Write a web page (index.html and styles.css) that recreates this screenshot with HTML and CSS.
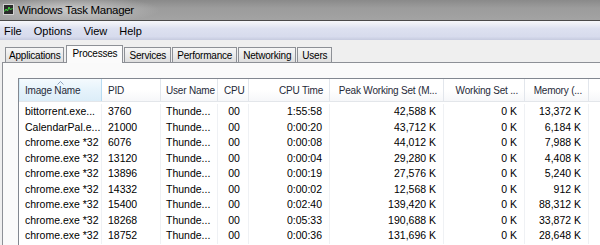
FILE: index.html
```html
<!DOCTYPE html>
<html lang="en">
<head>
  <meta charset="UTF-8" />
  <title>Windows Task Manager</title>
  <link rel="stylesheet" href="styles.css">
</head>
<body>
  <div class="window">
    <div class="titlebar">
      <svg class="app-icon" width="11" height="11" viewBox="0 0 11 11">
        <rect x="0.5" y="0.5" width="10" height="10" fill="#2b2b2b" stroke="#d0d0d0"/>
        <polyline points="1.5,7.5 3,5 4.5,7 6,3 7.5,6 9.5,4" fill="none" stroke="#3fd83f" stroke-width="1"/>
      </svg>
      <span class="title">Windows Task Manager</span>
    </div>

    <div class="menubar">
      <span>File</span>
      <span>Options</span>
      <span>View</span>
      <span>Help</span>
    </div>

    <div class="tabstrip">
      <div class="tab first">Applications</div>
      <div class="tab active">Processes</div>
      <div class="tab">Services</div>
      <div class="tab">Performance</div>
      <div class="tab">Networking</div>
      <div class="tab">Users</div>
    </div>

    <div class="panel">
      <div class="listview">
        <div class="lv-header">
          <div class="hcell sorted">
            <svg class="sort-arrow" width="7" height="4" viewBox="0 0 7 4">
              <polyline points="0.5,3.5 3.5,0.5 6.5,3.5" fill="none" stroke="#8fa3bb" stroke-width="1"/>
            </svg>
            Image Name
          </div>
          <div class="hcell">PID</div>
          <div class="hcell narrow">User Name</div>
          <div class="hcell">CPU</div>
          <div class="hcell right">CPU Time</div>
          <div class="hcell right">Peak Working Set (M...</div>
          <div class="hcell right">Working Set ...</div>
          <div class="hcell right">Memory (...</div>
          <div class="hcell last"></div>
        </div>

        <div class="lv-body">
          <div class="lv-row"><span>bittorrent.exe...</span><span>3760</span><span class="narrow">Thunde...</span><span class="center">00</span><span class="right">1:55:58</span><span class="right">42,588 K</span><span class="right">0 K</span><span class="right">13,372 K</span><span class="last"></span></div>
          <div class="lv-row"><span>CalendarPal.e...</span><span>21000</span><span class="narrow">Thunde...</span><span class="center">00</span><span class="right">0:00:20</span><span class="right">43,712 K</span><span class="right">0 K</span><span class="right">6,184 K</span><span class="last"></span></div>
          <div class="lv-row"><span>chrome.exe *32</span><span>6076</span><span class="narrow">Thunde...</span><span class="center">00</span><span class="right">0:00:08</span><span class="right">44,012 K</span><span class="right">0 K</span><span class="right">7,988 K</span><span class="last"></span></div>
          <div class="lv-row"><span>chrome.exe *32</span><span>13120</span><span class="narrow">Thunde...</span><span class="center">00</span><span class="right">0:00:04</span><span class="right">29,280 K</span><span class="right">0 K</span><span class="right">4,408 K</span><span class="last"></span></div>
          <div class="lv-row"><span>chrome.exe *32</span><span>13896</span><span class="narrow">Thunde...</span><span class="center">00</span><span class="right">0:00:19</span><span class="right">27,576 K</span><span class="right">0 K</span><span class="right">5,240 K</span><span class="last"></span></div>
          <div class="lv-row"><span>chrome.exe *32</span><span>14332</span><span class="narrow">Thunde...</span><span class="center">00</span><span class="right">0:00:02</span><span class="right">12,568 K</span><span class="right">0 K</span><span class="right">912 K</span><span class="last"></span></div>
          <div class="lv-row"><span>chrome.exe *32</span><span>15400</span><span class="narrow">Thunde...</span><span class="center">00</span><span class="right">0:02:40</span><span class="right">139,420 K</span><span class="right">0 K</span><span class="right">88,312 K</span><span class="last"></span></div>
          <div class="lv-row"><span>chrome.exe *32</span><span>18268</span><span class="narrow">Thunde...</span><span class="center">00</span><span class="right">0:05:33</span><span class="right">190,688 K</span><span class="right">0 K</span><span class="right">33,872 K</span><span class="last"></span></div>
          <div class="lv-row"><span>chrome.exe *32</span><span>18752</span><span class="narrow">Thunde...</span><span class="center">00</span><span class="right">0:00:36</span><span class="right">131,696 K</span><span class="right">0 K</span><span class="right">28,648 K</span><span class="last"></span></div>
        </div>
      </div>
    </div>
  </div>
</body>
</html>
```

FILE: styles.css
```css
* {
  box-sizing: border-box;
}
body {
  margin: 0;
  width: 600px;
  height: 245px;
  overflow: hidden;
  font-family: "Liberation Sans", Arial, sans-serif;
  font-size: 11px;
  color: #000;
  background: #efefef;
}
.window {
  width: 600px;
  height: 245px;
  display: flex;
  flex-direction: column;
  overflow: hidden;
}

/* title bar */
.titlebar {
  flex: none;
  height: 21px;
  display: flex;
  align-items: center;
  gap: 4px;
  padding: 0 0 1px 3px;
  border-bottom: 1px solid #4a4a4a;
  background:
    radial-gradient(ellipse 90px 14px at 70px 10px, rgba(215, 215, 215, 0.75), rgba(215, 215, 215, 0) 100%),
    linear-gradient(#8a8a8a, #9c9c9c 40%, #a3a3a3);
}
.title {
  font-size: 11.5px;
  letter-spacing: -0.3px;
  color: #000;
}

/* menu bar */
.menubar {
  flex: none;
  height: 19px;
  display: flex;
  align-items: center;
  gap: 12px;
  padding-left: 4px;
  background: linear-gradient(#f6f7fb 0, #eceef6 18%, #dde1f0 40%, #d7dbed 82%, #c6cbdf 100%);
}

/* tabs */
.tabstrip {
  flex: none;
  height: 22px;
  display: flex;
  align-items: flex-end;
  gap: 1px;
  padding-left: 5px;
  background: #efefef;
  font-size: 10px;
  letter-spacing: -0.2px;
}
.tab {
  height: 15px;
  line-height: 16px;
  padding: 0 4px;
  border: 1px solid #8d9096;
  border-bottom: none;
  background: linear-gradient(#f6f6f6, #ebebeb 50%, #dedede);
}
.tab.first {
  padding: 0 2px 0 3px;
}
.tab.active {
  position: relative;
  z-index: 1;
  height: 18px;
  line-height: 16px;
  margin: 0 0 -1px 1px;
  padding: 0 5px 0 6px;
  background: #fbfbfb;
}

/* panel */
.panel {
  flex: 1;
  min-height: 0;
  margin-left: 2px;
  padding: 15px 0 0 15px;
  border-top: 1px solid #8d9096;
  border-left: 1px solid #8d9096;
  background: #fafafa;
}
.listview {
  height: 100%;
  overflow: hidden;
  border-top: 1px solid #828790;
  border-left: 1px solid #828790;
  background: #fff;
}

/* list view */
.lv-header,
.lv-row {
  display: grid;
  grid-template-columns: 83px 59px 57px 31px 81px 114px 81px 64px 1fr;
}
.lv-header {
  height: 23px;
  border-bottom: 1px solid #e3e6ea;
  color: #1f2a38;
  font-size: 10px;
  letter-spacing: -0.2px;
}
.hcell {
  position: relative;
  padding: 2px 0 0 6px;
  line-height: 20px;
  white-space: nowrap;
  overflow: hidden;
  border-right: 1px solid #e2e6ec;
  background: linear-gradient(#ffffff, #ffffff 50%, #f6f7f9);
}
.hcell.sorted {
  background: linear-gradient(#f4fafe, #e6f3fb 50%, #dcedf8);
  border-right: 1px solid #b9dcf2;
  box-shadow: inset 1px 0 0 #d4ebf8;
}
.hcell.right {
  text-align: right;
  padding: 2px 6px 0 0;
}
.hcell.last {
  border-right: none;
}
.sort-arrow {
  position: absolute;
  left: 38px;
  top: 2px;
}
.lv-body {
  padding-top: 2px;
  font-size: 10.5px;
}
.lv-row span {
  height: 15.5px;
  line-height: 15.5px;
  padding: 0 0 0 6px;
  white-space: nowrap;
  overflow: hidden;
  border-right: 1px solid #eff1f4;
}
.lv-row span.narrow,
.hcell.narrow {
  padding-left: 5px;
}
.lv-row span.center {
  text-align: center;
  padding: 0 0 0 2px;
}
.lv-row span.right {
  text-align: right;
  padding: 0 7px 0 0;
}
.lv-row span.last {
  border-right: none;
}
```
